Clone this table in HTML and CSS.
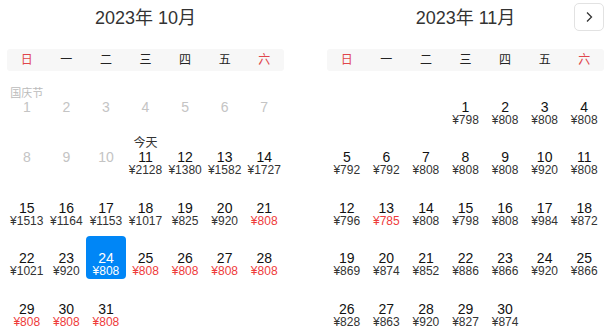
FILE: index.html
```html
<!DOCTYPE html>
<html lang="zh-CN">
<head>
<meta charset="utf-8">
<link rel="stylesheet" href="styles.css">
</head>
<body>
<div class="cal">
  <div class="month">
    <div class="title">2023年 10月</div>
    <div class="week"><span class="we">日</span><span>一</span><span>二</span><span>三</span><span>四</span><span>五</span><span class="we">六</span></div>
    <div class="days">
      <div class="day dis"><i class="lbl">国庆节</i><b>1</b></div>
      <div class="day dis"><i class="lbl"></i><b>2</b></div>
      <div class="day dis"><i class="lbl"></i><b>3</b></div>
      <div class="day dis"><i class="lbl"></i><b>4</b></div>
      <div class="day dis"><i class="lbl"></i><b>5</b></div>
      <div class="day dis"><i class="lbl"></i><b>6</b></div>
      <div class="day dis"><i class="lbl"></i><b>7</b></div>

      <div class="day dis"><i class="lbl"></i><b>8</b></div>
      <div class="day dis"><i class="lbl"></i><b>9</b></div>
      <div class="day dis"><i class="lbl"></i><b>10</b></div>
      <div class="day"><i class="lbl today">今天</i><b>11</b><em>¥2128</em></div>
      <div class="day"><i class="lbl"></i><b>12</b><em>¥1380</em></div>
      <div class="day"><i class="lbl"></i><b>13</b><em>¥1582</em></div>
      <div class="day"><i class="lbl"></i><b>14</b><em>¥1727</em></div>

      <div class="day"><i class="lbl"></i><b>15</b><em>¥1513</em></div>
      <div class="day"><i class="lbl"></i><b>16</b><em>¥1164</em></div>
      <div class="day"><i class="lbl"></i><b>17</b><em>¥1153</em></div>
      <div class="day"><i class="lbl"></i><b>18</b><em>¥1017</em></div>
      <div class="day"><i class="lbl"></i><b>19</b><em>¥825</em></div>
      <div class="day"><i class="lbl"></i><b>20</b><em>¥920</em></div>
      <div class="day"><i class="lbl"></i><b>21</b><em class="low">¥808</em></div>

      <div class="day"><i class="lbl"></i><b>22</b><em>¥1021</em></div>
      <div class="day"><i class="lbl"></i><b>23</b><em>¥920</em></div>
      <div class="day sel"><i class="lbl"></i><b>24</b><em>¥808</em></div>
      <div class="day"><i class="lbl"></i><b>25</b><em class="low">¥808</em></div>
      <div class="day"><i class="lbl"></i><b>26</b><em class="low">¥808</em></div>
      <div class="day"><i class="lbl"></i><b>27</b><em class="low">¥808</em></div>
      <div class="day"><i class="lbl"></i><b>28</b><em class="low">¥808</em></div>

      <div class="day"><i class="lbl"></i><b>29</b><em class="low">¥808</em></div>
      <div class="day"><i class="lbl"></i><b>30</b><em class="low">¥808</em></div>
      <div class="day"><i class="lbl"></i><b>31</b><em class="low">¥808</em></div>
    </div>
  </div>

  <div class="month">
    <div class="title">2023年 11月</div>
    <button class="next" aria-label="下个月"><svg width="10" height="12" viewBox="0 0 10 12"><polyline points="3,1.5 7.5,6 3,10.5" fill="none" stroke="#333" stroke-width="1.3"/></svg></button>
    <div class="week"><span class="we">日</span><span>一</span><span>二</span><span>三</span><span>四</span><span>五</span><span class="we">六</span></div>
    <div class="days">
      <div class="day empty"></div>
      <div class="day empty"></div>
      <div class="day empty"></div>
      <div class="day"><i class="lbl"></i><b>1</b><em>¥798</em></div>
      <div class="day"><i class="lbl"></i><b>2</b><em>¥808</em></div>
      <div class="day"><i class="lbl"></i><b>3</b><em>¥808</em></div>
      <div class="day"><i class="lbl"></i><b>4</b><em>¥808</em></div>

      <div class="day"><i class="lbl"></i><b>5</b><em>¥792</em></div>
      <div class="day"><i class="lbl"></i><b>6</b><em>¥792</em></div>
      <div class="day"><i class="lbl"></i><b>7</b><em>¥808</em></div>
      <div class="day"><i class="lbl"></i><b>8</b><em>¥808</em></div>
      <div class="day"><i class="lbl"></i><b>9</b><em>¥808</em></div>
      <div class="day"><i class="lbl"></i><b>10</b><em>¥920</em></div>
      <div class="day"><i class="lbl"></i><b>11</b><em>¥808</em></div>

      <div class="day"><i class="lbl"></i><b>12</b><em>¥796</em></div>
      <div class="day"><i class="lbl"></i><b>13</b><em class="low">¥785</em></div>
      <div class="day"><i class="lbl"></i><b>14</b><em>¥808</em></div>
      <div class="day"><i class="lbl"></i><b>15</b><em>¥798</em></div>
      <div class="day"><i class="lbl"></i><b>16</b><em>¥808</em></div>
      <div class="day"><i class="lbl"></i><b>17</b><em>¥984</em></div>
      <div class="day"><i class="lbl"></i><b>18</b><em>¥872</em></div>

      <div class="day"><i class="lbl"></i><b>19</b><em>¥869</em></div>
      <div class="day"><i class="lbl"></i><b>20</b><em>¥874</em></div>
      <div class="day"><i class="lbl"></i><b>21</b><em>¥852</em></div>
      <div class="day"><i class="lbl"></i><b>22</b><em>¥886</em></div>
      <div class="day"><i class="lbl"></i><b>23</b><em>¥866</em></div>
      <div class="day"><i class="lbl"></i><b>24</b><em>¥920</em></div>
      <div class="day"><i class="lbl"></i><b>25</b><em>¥866</em></div>

      <div class="day"><i class="lbl"></i><b>26</b><em>¥828</em></div>
      <div class="day"><i class="lbl"></i><b>27</b><em>¥863</em></div>
      <div class="day"><i class="lbl"></i><b>28</b><em>¥920</em></div>
      <div class="day"><i class="lbl"></i><b>29</b><em>¥827</em></div>
      <div class="day"><i class="lbl"></i><b>30</b><em>¥874</em></div>
    </div>
  </div>
</div>
</body>
</html>
```

FILE: styles.css
```css
* { box-sizing: border-box; }
html, body { margin: 0; padding: 0; background: #fff; }
body {
  font-family: "Liberation Sans", "Noto Sans CJK SC", sans-serif;
  color: #000;
  width: 611px;
  height: 336px;
  overflow: hidden;
}
.cal {
  display: flex;
  gap: 43px;
  padding: 0 7px;
}
.month {
  position: relative;
  width: 277px;
  flex: none;
}
.title {
  height: 49px;
  padding-top: 7px;
  text-align: center;
  font-size: 18px;
  line-height: 22px;
  color: #333;
}
.next {
  position: absolute;
  top: 3px;
  right: 0;
  width: 30px;
  height: 28px;
  padding: 0;
  border: 1px solid #e2e2e2;
  border-radius: 5px;
  background: #fff;
  display: flex;
  align-items: center;
  justify-content: center;
}
.week {
  display: grid;
  grid-template-columns: repeat(7, 1fr);
  height: 22px;
  background: #f7f7f7;
  border-radius: 3px;
  font-size: 12px;
  line-height: 22px;
  text-align: center;
  color: #222;
}
.week .we { color: #e0464c; }
.days {
  display: grid;
  grid-template-columns: repeat(7, 1fr);
  grid-auto-rows: 43px;
  row-gap: 7.5px;
  margin-top: 13.5px;
}
.day {
  display: flex;
  flex-direction: column;
  align-items: center;
  padding-top: 2px;
  border-radius: 4px;
  text-align: center;
}
.lbl {
  display: block;
  height: 13px;
  font-style: normal;
  font-size: 11px;
  line-height: 13px;
  color: #bbb;
  white-space: nowrap;
}
.lbl.today { color: #333; font-size: 12px; }
.day b {
  display: block;
  font-weight: normal;
  font-size: 14px;
  line-height: 14px;
  color: #111;
}
.day em {
  display: block;
  font-style: normal;
  font-size: 12px;
  line-height: 12px;
  color: #333;
}
.day em.low { color: #ee3b3b; }
.day.dis b { color: #c4c4c4; }
.day.sel { background: #0086f6; }
.day.sel b, .day.sel em { color: #fff; }
```
